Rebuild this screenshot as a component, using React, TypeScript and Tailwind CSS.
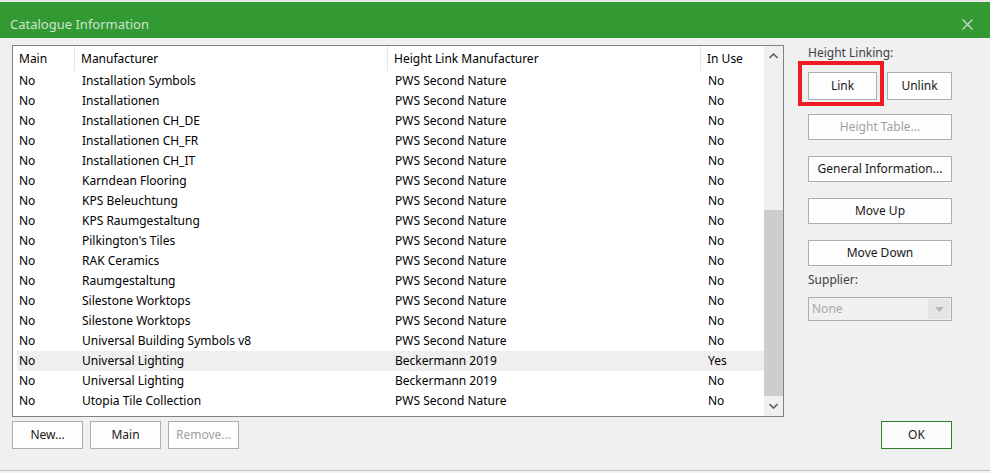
import React from 'react';

const rows: [string, string, string, string][] = [
  ['No', 'Installation Symbols', 'PWS Second Nature', 'No'],
  ['No', 'Installationen', 'PWS Second Nature', 'No'],
  ['No', 'Installationen CH_DE', 'PWS Second Nature', 'No'],
  ['No', 'Installationen CH_FR', 'PWS Second Nature', 'No'],
  ['No', 'Installationen CH_IT', 'PWS Second Nature', 'No'],
  ['No', 'Karndean Flooring', 'PWS Second Nature', 'No'],
  ['No', 'KPS Beleuchtung', 'PWS Second Nature', 'No'],
  ['No', 'KPS Raumgestaltung', 'PWS Second Nature', 'No'],
  ['No', "Pilkington's Tiles", 'PWS Second Nature', 'No'],
  ['No', 'RAK Ceramics', 'PWS Second Nature', 'No'],
  ['No', 'Raumgestaltung', 'PWS Second Nature', 'No'],
  ['No', 'Silestone Worktops', 'PWS Second Nature', 'No'],
  ['No', 'Silestone Worktops', 'PWS Second Nature', 'No'],
  ['No', 'Universal Building Symbols v8', 'PWS Second Nature', 'No'],
  ['No', 'Universal Lighting', 'Beckermann 2019', 'Yes'],
  ['No', 'Universal Lighting', 'Beckermann 2019', 'No'],
  ['No', 'Utopia Tile Collection', 'PWS Second Nature', 'No'],
];

const Btn: React.FC<{ label: string; disabled?: boolean; className?: string }> = ({ label, disabled, className }) => (
  <button
    type="button"
    className={`h-[28px] border border-[#adadad] bg-[#fdfdfd] text-[12px] flex items-center justify-center ${
      disabled ? 'text-[#a0a0a0]' : 'text-[#1a1a1a]'
    } ${className ?? ''}`}
  >
    {label}
  </button>
);

export default function App() {
  return (
    <div
      className="w-[990px] h-[473px] bg-[#f0f0f0] flex flex-col overflow-hidden"
      style={{ fontFamily: '"Noto Sans", "DejaVu Sans", sans-serif' }}
    >
      <div className="h-[2px] bg-[#e8e8e8]" />
      {/* Title bar */}
      <div className="h-[36px] bg-[#339933] flex items-center justify-between pt-[9px] pl-[10px] pr-[17px]">
        <span className="text-[13px] text-[#cde4cd]">Catalogue Information</span>
        <svg width="11" height="11" viewBox="0 0 11 11">
          <path d="M0.5 0.5 L10.5 10.5 M10.5 0.5 L0.5 10.5" stroke="#c9dcc9" strokeWidth="1.3" />
        </svg>
      </div>

      <div className="flex flex-1 pt-[7px] pl-[12px]">
        {/* Left: list and buttons */}
        <div className="w-[772px] flex flex-col">
          <div className="h-[372px] border border-[#828282] bg-white flex">
            <div className="flex-1 flex flex-col text-[12px] text-black">
              <div className="h-[25px] flex items-center">
                <div className="w-[62px] pl-[6px] h-full flex items-center border-r border-[#e5e5e5]">Main</div>
                <div className="w-[313px] pl-[6px] h-full flex items-center border-r border-[#e5e5e5]">Manufacturer</div>
                <div className="w-[313px] pl-[6px] h-full flex items-center border-r border-[#e5e5e5]">Height Link Manufacturer</div>
                <div className="flex-1 pl-[6px] h-full flex items-center">In Use</div>
              </div>
              {rows.map((r, i) => (
                <div
                  key={i}
                  className={`h-[20px] flex items-center ${r[3] === 'Yes' ? 'bg-[#efefef] ml-[4px]' : ''}`}
                >
                  <div className={`${r[3] === 'Yes' ? 'w-[58px] pl-[2px]' : 'w-[62px] pl-[6px]'}`}>{r[0]}</div>
                  <div className="w-[313px] pl-[7px]">{r[1]}</div>
                  <div className="w-[313px] pl-[7px]">{r[2]}</div>
                  <div className="flex-1 pl-[7px]">{r[3]}</div>
                </div>
              ))}
            </div>
            {/* Scrollbar */}
            <div className="w-[19px] bg-[#f0f0f0] flex flex-col">
              <div className="h-[20px] flex items-center justify-center">
                <svg width="9" height="6" viewBox="0 0 9 6">
                  <path d="M0.5 5 L4.5 1 L8.5 5" fill="none" stroke="#606060" strokeWidth="1.6" />
                </svg>
              </div>
              <div className="flex-1 flex flex-col justify-end">
                <div className="h-[186px] bg-[#cdcdcd]" />
              </div>
              <div className="h-[20px] flex items-center justify-center">
                <svg width="9" height="6" viewBox="0 0 9 6">
                  <path d="M0.5 1 L4.5 5 L8.5 1" fill="none" stroke="#606060" strokeWidth="1.6" />
                </svg>
              </div>
            </div>
          </div>
          <div className="flex gap-[7px] mt-[4px]">
            <Btn label="New..." className="w-[71px]" />
            <Btn label="Main" className="w-[71px]" />
            <Btn label="Remove..." className="w-[71px]" disabled />
          </div>
        </div>

        {/* Right panel */}
        <div className="ml-[24px] pt-[1px] w-[144px] flex flex-col text-[12px]">
          <div className="h-[14px] flex items-center text-[#404040]">Height Linking:</div>
          <div className="flex justify-between mt-[12px]">
            <div className="relative">
              <Btn label="Link" className="w-[69px]" />
              <div className="absolute left-[-10px] top-[-11px] w-[86px] h-[45px] border-[4px] border-[#ed1c24]" />
            </div>
            <Btn label="Unlink" className="w-[65px]" />
          </div>
          <Btn label="Height Table..." disabled className="w-[144px] mt-[14px] !h-[26px]" />
          <Btn label="General Information..." className="w-[144px] mt-[16px] !h-[26px]" />
          <Btn label="Move Up" className="w-[144px] mt-[16px] !h-[26px]" />
          <Btn label="Move Down" className="w-[144px] mt-[16px] !h-[26px]" />
          <div className="mt-[6px] h-[16px] flex items-center text-[#404040]">Supplier:</div>
          <div className="mt-[9px] h-[24px] w-[144px] border border-[#adadad] bg-[#f0f0f0] flex items-center pl-[3px] pr-[1px]">
            <span className="flex-1 text-[#a8a8a8]">None</span>
            <div className="w-[22px] h-[20px] bg-[#e5e5e5] flex items-center justify-center">
              <svg width="9" height="5" viewBox="0 0 9 5">
                <path d="M0 0 L9 0 L4.5 5 Z" fill="#b4b4b4" />
              </svg>
            </div>
          </div>
          <div className="flex-1 flex flex-col justify-end pb-[21px]">
            <button
              type="button"
              className="ml-[73px] w-[71px] h-[28px] border border-[#2f7d2f] bg-[#fbfbfb] text-[12px] text-[#1a1a1a]"
            >
              OK
            </button>
          </div>
        </div>
      </div>
      <div className="h-[1px] bg-[#c4c4c4]" />
      <div className="h-[2px] bg-[#f0f0f0]" />
    </div>
  );
}
